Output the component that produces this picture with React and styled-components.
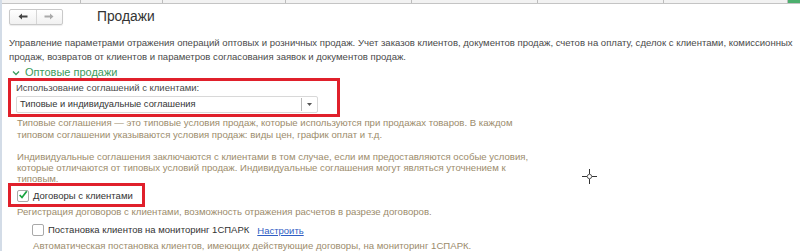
import { createGlobalStyle, styled } from "styled-components";

const GlobalStyle = createGlobalStyle`
  html, body { margin: 0; padding: 0; background: #fff; }
  body { font-family: "Liberation Sans", Arial, sans-serif; }
`;

// tab widths along the top strip, last one stretches
const tabs = [79, 82, 123, 126, 126, 126, 124, 0];

const App = () => {
  return (
    <>
      <GlobalStyle />
      <Page>
        <TabStrip>
          {tabs.map((w, i) => (
            <Tab key={i} $w={w} $last={i === tabs.length - 1} />
          ))}
        </TabStrip>
        <Content>
          <Header>
            <NavGroup>
              <NavButton>
                <Arrow dir="left" dark />
              </NavButton>
              <NavButton>
                <Arrow dir="right" />
              </NavButton>
            </NavGroup>
            <Title>Продажи</Title>
          </Header>
          <Description>
            Управление параметрами отражения операций оптовых и розничных продаж. Учет заказов клиентов, документов продаж, счетов на оплату, сделок с клиентами, комиссионных
            <br />
            продаж, возвратов от клиентов и параметров согласования заявок и документов продаж.
          </Description>
          <GroupTitle>
            <svg width="8" height="6" viewBox="0 0 8 6">
              <path d="M1 1.5 L4 4.5 L7 1.5" fill="none" stroke="#3a9c5c" strokeWidth="1.3" />
            </svg>
            Оптовые продажи
          </GroupTitle>
          <Highlight $w={332} $pad="1px 19px 1px 5px" $top={-1}>
            <FieldLabel>Использование соглашений с клиентами:</FieldLabel>
            <Select>
              <SelectValue>Типовые и индивидуальные соглашения</SelectValue>
              <SelectButton>
                <svg width="5" height="3" viewBox="0 0 5 3">
                  <path d="M0 0 H5 L2.5 3 Z" fill="#555" />
                </svg>
              </SelectButton>
            </Select>
          </Highlight>
          <Hint $indent={8} $top={0} $lh={12}>
            Типовые соглашения — это типовые условия продаж, которые используются при продажах товаров. В каждом
            <br />
            типовом соглашении указываются условия продаж: виды цен, график оплат и т.д.
          </Hint>
          <Hint $indent={8} $top={10} $lh={11}>
            Индивидуальные соглашения заключаются с клиентами в том случае, если им предоставляются особые условия,
            <br />
            которые отличаются от типовых условий продаж. Индивидуальные соглашения могут являться уточнением к
            <br />
            типовым.
          </Hint>
          <Highlight $w={137} $pad="3px 4px 1px 6px" $top={-1}>
            <CheckRow>
              <CheckBox>
                <svg width="12" height="12" viewBox="0 0 12 12">
                  <path d="M2 6 L4.8 9 L10.5 1.5" fill="none" stroke="#19a33f" strokeWidth="2.1" />
                </svg>
              </CheckBox>
              <CheckText>Договоры с клиентами</CheckText>
            </CheckRow>
          </Highlight>
          <Hint $indent={8} $top={-1} $lh={12}>
            Регистрация договоров с клиентами, возможность отражения расчетов в разрезе договоров.
          </Hint>
          <SubRow>
            <CheckBox />
            <CheckText>Постановка клиентов на мониторинг 1СПАРК</CheckText>
            <Link>Настроить</Link>
          </SubRow>
          <Hint $indent={24} $top={3} $lh={12}>
            Автоматическая постановка клиентов, имеющих действующие договоры, на мониторинг 1СПАРК.
          </Hint>
        </Content>
        <Cursor>
          <svg width="15" height="15" viewBox="0 0 15 15">
            <path d="M7.5 0 V5 M7.5 10 V15 M0 7.5 H5 M10 7.5 H15" stroke="#333" strokeWidth="1" />
            <circle cx="7.5" cy="7.5" r="2.2" fill="none" stroke="#555" strokeWidth="1" />
          </svg>
        </Cursor>
      </Page>
    </>
  );
};

const Arrow = ({ dir, dark }) => (
  <svg width="10" height="7" viewBox="0 0 10 7">
    {dir === "left" ? (
      <path d="M0.5 3.5 L4 0.5 V2.6 H9.5 V4.4 H4 V6.5 Z" fill={dark ? "#444" : "#aaa"} />
    ) : (
      <path d="M9.5 3.5 L6 0.5 V2.6 H0.5 V4.4 H6 V6.5 Z" fill={dark ? "#444" : "#aaa"} />
    )}
  </svg>
);

const Page = styled.div`
  position: relative;
  width: 800px;
  height: 251px;
  overflow: hidden;
  border-left: 2px solid #d3dce7;
  box-sizing: border-box;
`;

const TabStrip = styled.div`
  display: flex;
  height: 3px;
  border-bottom: 1px solid #c4c4c4;
  background: #f2f2f2;
`;

const Tab = styled.div`
  width: ${(p) => (p.$w ? `${p.$w}px` : "auto")};
  flex: ${(p) => (p.$last ? "1" : "none")};
  box-sizing: border-box;
  border-right: ${(p) => (p.$last ? "none" : "1px solid #bdbdbd")};
  background: ${(p) => (p.$last ? "#4caf6e" : "#f2f2f2")};
`;

const Content = styled.div`
  padding: 4px 0 0 7px;
  display: flex;
  flex-direction: column;
`;

const Header = styled.div`
  display: flex;
  align-items: center;
  height: 17px;
  margin-bottom: 11px;
`;

const NavGroup = styled.div`
  display: flex;
  width: 54px;
  height: 16px;
  border: 1px solid #c9c9c9;
  border-radius: 2px;
  box-sizing: border-box;
  background: linear-gradient(#ffffff, #f1f1f1);
  box-shadow: 0 1px 1px rgba(0, 0, 0, 0.08);
`;

const NavButton = styled.div`
  flex: 1;
  display: flex;
  align-items: center;
  justify-content: center;
  & + & {
    border-left: 1px solid #d6d6d6;
  }
`;

const Title = styled.div`
  margin-left: 34px;
  font-size: 13.8px;
  color: #333;
  line-height: 17px;
`;

const Description = styled.div`
  font-size: 9.55px;
  line-height: 14px;
  color: #4a4a4a;
  white-space: nowrap;
`;

const GroupTitle = styled.div`
  display: flex;
  align-items: center;
  gap: 5px;
  margin: 2px 0 0 3px;
  font-size: 11px;
  line-height: 13px;
  color: #3a9c5c;
  svg {
    margin-top: 1px;
  }
`;

const Highlight = styled.div`
  width: ${(p) => p.$w}px;
  margin: ${(p) => p.$top}px 0 0 -1px;
  border: 3px solid #e0202b;
  box-sizing: border-box;
  padding: ${(p) => p.$pad};
`;

const FieldLabel = styled.div`
  font-size: 9.5px;
  line-height: 12px;
  color: #4a4a4a;
  white-space: nowrap;
`;

const Select = styled.div`
  display: flex;
  height: 17px;
  margin-top: 2px;
  border: 1px solid #d8d8d8;
  border-radius: 2px;
  box-sizing: border-box;
  background: #fff;
`;

const SelectValue = styled.div`
  flex: 1;
  padding-left: 3px;
  font-size: 9.3px;
  line-height: 15px;
  color: #333;
  white-space: nowrap;
`;

const SelectButton = styled.div`
  width: 15px;
  display: flex;
  align-items: center;
  justify-content: center;
  border-left: 1px solid #b8b8b8;
  margin: 1px 0;
`;

const Hint = styled.div`
  margin-top: ${(p) => p.$top}px;
  padding-left: ${(p) => p.$indent}px;
  font-size: 9.6px;
  line-height: ${(p) => p.$lh}px;
  color: #9c8c6c;
  white-space: nowrap;
`;

const CheckRow = styled.div`
  display: flex;
  align-items: center;
  gap: 4px;
  height: 14px;
`;

const CheckBox = styled.div`
  width: 12px;
  height: 12px;
  flex: none;
  box-sizing: border-box;
  border: 1px solid #a9a9a9;
  border-radius: 2px;
  background: #fff;
  display: flex;
  align-items: center;
  justify-content: center;
  svg {
    margin-top: -2px;
  }
`;

const CheckText = styled.div`
  font-size: 9.5px;
  line-height: 14px;
  color: #333;
  white-space: nowrap;
`;

const SubRow = styled.div`
  display: flex;
  align-items: center;
  gap: 4px;
  height: 14px;
  margin: 5px 0 0 23px;
`;

const Link = styled.a`
  margin-left: 4px;
  font-size: 9.5px;
  color: #2f5ec4;
  text-decoration: underline;
  cursor: pointer;
`;

const Cursor = styled.div`
  position: absolute;
  left: 580px;
  top: 169px;
  width: 15px;
  height: 15px;
`;

export default App;
